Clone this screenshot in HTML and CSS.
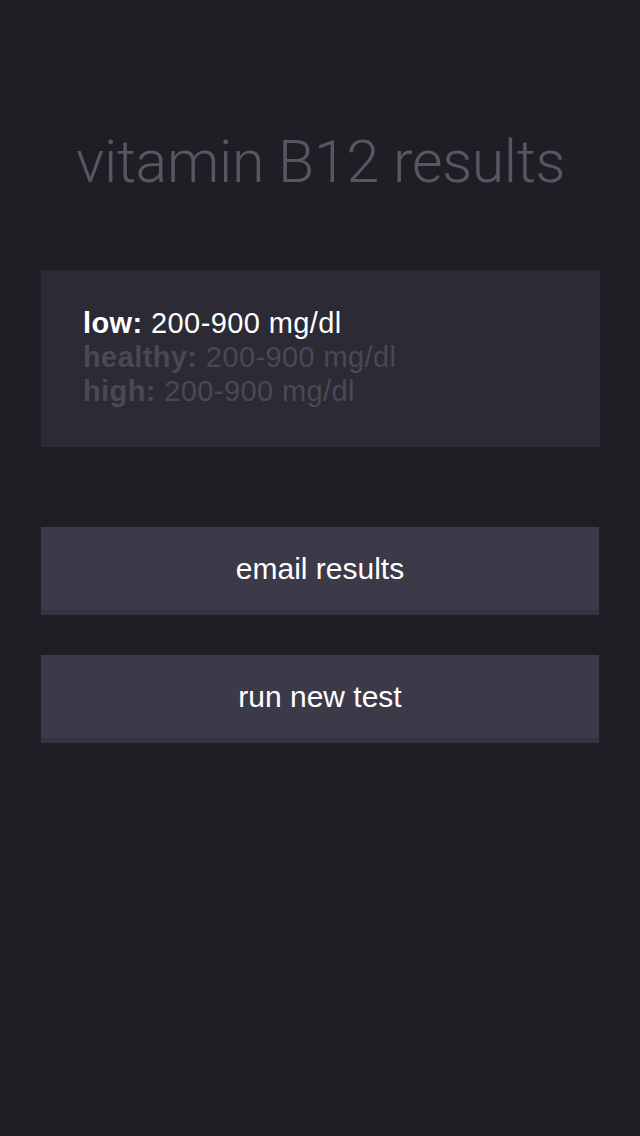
FILE: index.html
```html
<!DOCTYPE html>
<html>
<head>
<meta charset="utf-8">
<link rel="stylesheet" href="styles.css">
</head>
<body>
<div class="screen">
  <h1 class="title">vitamin B12 results</h1>
  <div class="card">
    <div class="row row-active"><b>low:</b> 200-900 mg/dl</div>
    <div class="row row-dim"><b>healthy:</b> 200-900 mg/dl</div>
    <div class="row row-dim"><b>high:</b> 200-900 mg/dl</div>
  </div>
  <div class="actions">
    <button class="btn">email results</button>
    <button class="btn">run new test</button>
  </div>
</div>
</body>
</html>
```
FILE: styles.css
```css
html, body {
  margin: 0;
  padding: 0;
  background: #201e24;
}
.screen {
  width: 640px;
  height: 1136px;
  background: #201e24;
  display: flex;
  flex-direction: column;
  padding: 0 40px 0 41px;
  box-sizing: border-box;
  font-family: "Liberation Sans", Arial, sans-serif;
}
.title {
  margin: 126px 0 0 0;
  font-family: Roboto, "Liberation Sans", sans-serif;
  font-weight: 300;
  font-size: 59px;
  line-height: 72px;
  color: #595564;
  text-align: center;
  letter-spacing: -0.3px;
}
.card {
  margin-top: 72px;
  background: #2c2a34;
  height: 177px;
  box-sizing: border-box;
  padding: 36px 42px;
  display: flex;
  flex-direction: column;
}
.row {
  font-size: 29px;
  line-height: 34px;
  letter-spacing: 0.4px;
  white-space: nowrap;
}
.row b { font-weight: bold; }
.row-active { color: #ffffff; }
.row-dim { color: #4b4856; }
.actions {
  margin-top: 80px;
  display: flex;
  flex-direction: column;
  gap: 40px;
}
.btn {
  width: 558px;
  height: 88px;
  border: 0;
  margin: 0;
  padding: 0 0 5px 0;
  background: #3c3949;
  box-shadow: inset 0 -5px 0 #353241;
  color: #ffffff;
  font-family: "Liberation Sans", Arial, sans-serif;
  font-size: 30px;
  text-align: center;
}
```
